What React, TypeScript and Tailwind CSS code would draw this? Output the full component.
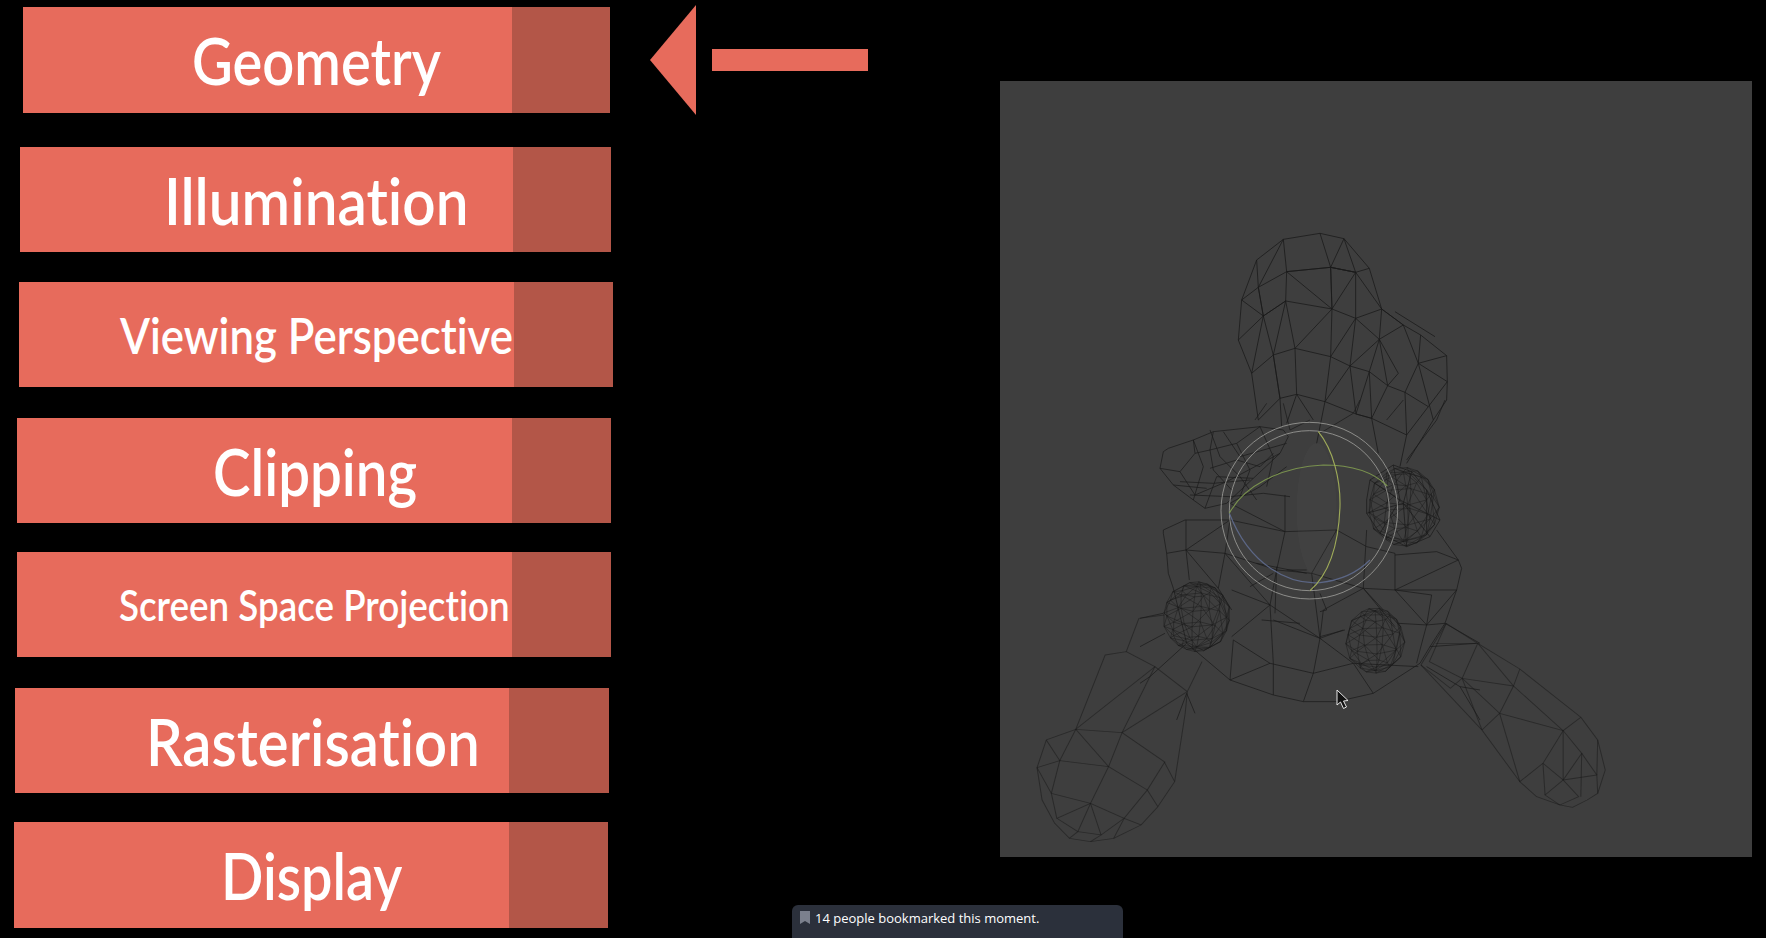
const rows = [
  { label: "Geometry", row: "ml-[23px] w-[587px] h-[106px] mt-[7px]", dark: "w-[98px]", pad: "pl-[169px]", text: "text-[66px] scale-x-[0.85]" },
  { label: "Illumination", row: "ml-[20px] w-[591px] h-[105px] mt-[34px]", dark: "w-[98px]", pad: "pl-[144px]", text: "text-[66px] scale-x-[0.886]" },
  { label: "Viewing Perspective", row: "ml-[19px] w-[594px] h-[105px] mt-[30px]", dark: "w-[99px]", pad: "pl-[101px]", text: "text-[50px] scale-x-[0.875]" },
  { label: "Clipping", row: "ml-[17px] w-[594px] h-[105px] mt-[31px]", dark: "w-[99px]", pad: "pl-[196px]", text: "text-[66px] scale-x-[0.855]" },
  { label: "Screen Space Projection", row: "ml-[17px] w-[594px] h-[105px] mt-[29px]", dark: "w-[99px]", pad: "pl-[102px]", text: "text-[42px] scale-x-[0.875]" },
  { label: "Rasterisation", row: "ml-[15px] w-[594px] h-[105px] mt-[31px]", dark: "w-[100px]", pad: "pl-[131px]", text: "text-[66px] scale-x-[0.879]" },
  { label: "Display", row: "ml-[14px] w-[594px] h-[106px] mt-[29px]", dark: "w-[99px]", pad: "pl-[207px]", text: "text-[66px] scale-x-[0.845]" },
];

// traced from the zoomed crops, each group has its own origin and scale
const headLines = [
  "295,390 305,270 350,150 430,88 540,70 612,86 688,175 725,297 790,345 842,375 920,437 922,515 920,570 880,630 800,760",
  "295,390 335,490 355,630",
  "305,270 355,232 440,185 572,172 647,187 688,175",
  "295,390 370,318 437,273 576,297 647,325 725,297",
  "335,490 400,435 465,415 572,440 630,468 688,485 743,527 795,547 865,590",
  "355,630 420,565 470,553 555,575 648,612 695,625 800,675",
  "430,88 440,185 437,273 465,415 470,553 440,640",
  "540,70 572,172 576,297 465,415",
  "612,86 572,172 647,187 647,325 630,468 555,575 530,700",
  "612,86 647,187 725,297 718,388 688,485 695,625 715,730",
  "350,150 355,232 370,318 400,435 420,565 425,650",
  "430,88 355,232 370,318 437,273 400,435",
  "440,185 572,172 576,297 440,185",
  "572,172 647,187 576,297",
  "576,297 572,440 555,575",
  "647,325 572,440",
  "647,325 718,388 630,468",
  "725,297 790,345 835,460 795,547 800,675 780,770",
  "790,345 718,388 743,527 695,625 648,612 688,485",
  "842,375 835,460 880,630",
  "835,460 920,437",
  "835,460 922,515 865,590 800,675",
  "718,388 775,490 743,527",
  "630,468 648,612",
  "305,270 370,318 335,490",
  "420,565 400,435",
  "470,553 520,630",
  "765,305 885,380",
];

const bodyLines = [
  // left side and belly outline
  "135,360 70,390 70,400 80,460 85,520 100,565 140,730 270,840 400,885 490,905 590,905 700,880 840,790",
  "890,390 955,480 965,505 950,570 915,670 870,740 840,790",
  // left shoulder
  "138,360 138,450 148,540",
  "80,460 138,450 255,460",
  "138,450 235,565",
  "255,460 235,565 275,630",
  "255,460 390,615",
  "135,360 270,360 435,395",
  "270,360 255,460",
  "138,450 270,360",
  // middle of the chest
  "435,285 435,395 410,510 390,615 400,790 400,885",
  "270,310 435,395 590,390 680,440 765,460",
  "255,460 410,510 515,520 670,565",
  "590,390 515,520 540,715 520,820 490,905",
  "390,615 540,715",
  "275,570 390,615",
  "275,710 390,615",
  "540,715 550,630 670,565",
  "400,660 540,715 610,690",
  // right chest
  "670,565 765,570 950,570",
  "765,460 765,570",
  "955,480 765,570",
  "765,465 890,455 955,480",
  "680,390 670,565 765,680",
  "765,570 875,585 860,675",
  "765,570 860,675",
  "950,570 860,675",
  "915,670 860,675 775,670",
  "670,565 730,630",
  "860,675 840,750 830,790",
  "915,670 1020,730",
  "870,740 1010,730",
  "540,635 560,630 540,580",
  "540,710 615,690",
  // belly
  "280,720 390,790 520,820 640,790 835,800",
  "540,715 640,790 700,880",
  "270,840 390,790",
  "280,720 270,840",
  "0,655 70,640",
  "0,740 75,700",
  "140,730 30,830 0,850",
  "140,880 165,940",
  "140,880 110,960",
  // stray marks inside the ring
  "400,520 330,560",
  "365,660 480,670",
  "410,500 405,640",
  "350,490 500,520",
  "440,510 500,510",
  "860,800 960,860 1020,870",
  "960,860 1020,960",
  "380,10 345,60",
  "430,10 450,90 510,60",
  "540,100 640,40 660,0",
  "740,60 790,0",
  "800,180 890,60 915,0",
  // left hand
  "70,155 60,205 100,255 160,300 195,325 260,310 340,235 420,160 445,110 430,90 360,80 220,95 160,120 85,145 70,155",
  "160,120 165,160 120,215 60,205",
  "120,215 165,285",
  "220,95 210,150 220,210 275,270",
  "165,160 210,150 290,130 360,80",
  "210,205 290,180 360,200 400,160",
  "120,245 220,250 330,240",
  "165,285 260,245 420,160",
  "160,120 190,200 160,300",
  "100,255 200,265",
  "290,130 330,210 300,290",
  "360,80 400,170 380,260",
  "250,95 300,170 440,130",
  "195,325 230,230 340,235",
  "150,285 270,290 370,280 450,290",
  "270,310 360,260 440,200",
  "210,90 240,170 300,230 350,300",
  // right hand
  "680,300 690,240 760,195 815,215 860,270 900,360 870,410 800,440 720,400 680,340 680,300",
  "760,195 780,300 900,360",
  "815,215 790,310 800,440",
  "690,240 780,300 720,400",
  "860,270 860,400",
  "680,340 790,310 870,410",
];

const limbLines = [
  "480,185 445,275 440,340 415,545 375,620 335,675 270,715 215,725 165,715 130,670 100,600 88,503 110,420 180,388 250,165 300,155 368,200 445,275",
  "180,388 290,398 390,485 415,545",
  "180,388 368,200",
  "290,398 368,200",
  "290,398 445,275",
  "290,398 258,500 350,570 392,485",
  "110,420 142,482 88,503",
  "142,482 258,500",
  "142,482 180,388",
  "258,500 180,388",
  "142,482 122,580 215,610 295,655 335,675",
  "88,503 122,580 135,655 215,610",
  "215,610 185,695 135,655",
  "215,610 240,705 295,655 270,715",
  "215,610 258,500",
  "295,655 350,570 375,620",
  "185,695 240,705 215,725",
  "185,695 165,715",
  "300,155 330,55 390,45",
  "1060,70 1135,130 1235,207 1380,352 1420,420 1438,510 1420,580 1395,600 1360,622 1330,615 1275,590 1235,545 1145,390 1000,195",
  "1060,70 1020,185 1098,235 1220,258 1338,392 1380,352",
  "1135,130 1098,235 1070,265 1000,195",
  "1235,207 1220,258 1187,340 1338,392",
  "1098,235 1187,340 1145,390",
  "1098,235 1145,390",
  "1187,340 1235,545",
  "1338,392 1290,490 1235,545",
  "1338,392 1382,460 1338,540 1290,490 1295,585",
  "1338,392 1338,540 1295,585 1330,615",
  "1382,460 1418,525 1338,540 1375,590 1330,615",
  "1382,460 1380,590",
  "1420,420 1418,525 1420,580",
  "1220,258 1135,130",
  "1035,130 1135,130",
  "1000,195 1060,70",
];

// low poly ball: rings, meridians and one diagonal per quad, seen at a tilt
function ballLines(cx: number, cy: number, rx: number, ry: number, rings: number, sides: number, tilt: number, turn: number) {
  const t = (tilt * Math.PI) / 180;
  const u = (turn * Math.PI) / 180;
  const at = (r: number, s: number) => {
    const a = -Math.PI / 2 + (r / rings) * Math.PI;
    const b = (s / sides) * Math.PI * 2 + u;
    const x = Math.cos(a) * Math.sin(b);
    const y = Math.sin(a);
    const z = Math.cos(a) * Math.cos(b);
    const y2 = y * Math.cos(t) - z * Math.sin(t);
    return `${(cx + x * rx).toFixed(1)},${(cy + y2 * ry).toFixed(1)}`;
  };
  const lines: string[] = [];
  for (let r = 1; r < rings; r++) {
    const pts: string[] = [];
    for (let s = 0; s <= sides; s++) pts.push(at(r, s));
    lines.push(pts.join(" "));
  }
  for (let s = 0; s < sides; s++) {
    const pts: string[] = [];
    for (let r = 0; r <= rings; r++) pts.push(at(r, s));
    lines.push(pts.join(" "));
    for (let r = 1; r < rings - 1; r++) lines.push(`${at(r, s)} ${at(r + 1, s + 1)}`);
  }
  return lines;
}

const balls = [
  ...ballLines(790, 320, 108, 118, 6, 9, 28, 12),
  ...ballLines(170, 650, 102, 105, 7, 10, 30, 8),
  ...ballLines(705, 722, 90, 98, 6, 9, 24, 16),
];

const Mesh = () => (
  <svg viewBox="1000 81 752 776" className="block w-full h-full">
    <g fill="none" stroke="#1a1a1a" strokeLinejoin="round">
      <g transform="translate(1140 210) scale(0.3333)" strokeOpacity="0.9">
        {headLines.map((p, i) => (
          <polyline key={i} points={p} strokeWidth="2.6" />
        ))}
      </g>
      <g transform="translate(1140 400) scale(0.3333)" strokeOpacity="0.9">
        {bodyLines.map((p, i) => (
          <polyline key={i} points={p} strokeWidth="2.4" />
        ))}
        {balls.map((p, i) => (
          <polyline key={i} points={p} strokeWidth="1.9" strokeOpacity="0.75" />
        ))}
        <ellipse cx="530" cy="330" rx="60" ry="200" fill="#ffffff" fillOpacity="0.02" stroke="none" />
        <circle cx="508" cy="332" r="265" stroke="#a3a3a0" strokeWidth="2.6" />
        <circle cx="508" cy="332" r="240" stroke="#a3a3a0" strokeWidth="2.6" />
        <path d="M268 340C330 500 450 555 540 548C610 540 660 510 690 480" stroke="#5f6c8e" strokeWidth="3.6" />
        <path d="M268 340C310 260 420 200 550 195C630 195 700 215 742 258" stroke="#7f9a50" strokeWidth="3.4" />
        <path d="M535 95C580 150 602 240 600 320C596 430 570 520 510 572" stroke="#a9b65c" strokeWidth="3.4" />
      </g>
      <g transform="translate(1000 600) scale(0.4209 0.3333)" strokeOpacity="0.55">
        {limbLines.map((p, i) => (
          <polyline key={i} points={p} strokeWidth="2.4" />
        ))}
      </g>
    </g>
    <path
      d="M1337 690L1337 705L1340.5 702L1343.5 708.500L1346.500 707L1343.500 701L1348 700.500Z"
      fill="#111111"
      stroke="#e6e6e6"
      strokeWidth="1"
    />
  </svg>
);

export default function App() {
  return (
    <div className="relative flex h-[938px] w-full overflow-hidden bg-black">
      <div className="flex w-[650px] shrink-0 flex-col">
        {rows.map((r) => (
          <div key={r.label} className={`flex shrink-0 ${r.row}`}>
            <div className={`flex min-w-0 flex-1 items-center bg-[#e76b5c] ${r.pad}`}>
              <span
                className={`origin-left whitespace-nowrap font-[Lato,sans-serif] font-semibold leading-none text-white [font-variant-ligatures:none] ${r.text}`}
              >
                {r.label}
              </span>
            </div>
            <div className={`shrink-0 bg-[#b35648] ${r.dark}`} />
          </div>
        ))}
      </div>

      <div className="mt-[5px] flex h-[110px] w-[218px] shrink-0 items-center gap-4">
        <svg width="46" height="110" viewBox="0 0 46 110" className="shrink-0">
          <path d="M46 0V110L0 55Z" fill="#e76b5c" />
        </svg>
        <div className="h-[22px] w-[156px] bg-[#e76b5c]" />
      </div>

      <div className="ml-[132px] mt-[81px] h-[776px] w-[752px] shrink-0 bg-[#3e3e3e]">
        <Mesh />
      </div>

      <div className="absolute bottom-0 left-[792px] flex h-[33px] w-[331px] items-start gap-[5px] rounded-t-md bg-[#2b303b] pl-2 pt-[3px] font-['Open_Sans',sans-serif] text-[13px] leading-[20px] text-white">
        <svg width="10" height="13" viewBox="0 0 10 13" className="mt-[3px] shrink-0">
          <path d="M0 0H10V13L5 10L0 13Z" fill="#7b808d" />
        </svg>
        <span>14 people bookmarked this moment.</span>
      </div>
    </div>
  );
}
